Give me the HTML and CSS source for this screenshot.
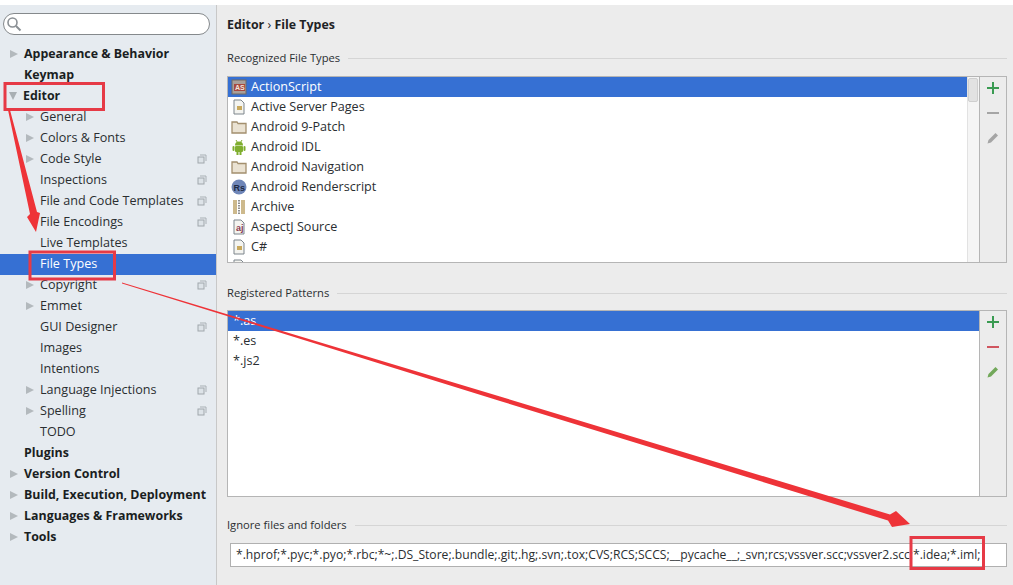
FILE: index.html
```html
<!DOCTYPE html>
<html lang="en">
<head>
<meta charset="utf-8">
<title>Settings - File Types</title>
<link rel="stylesheet" href="styles.css">
</head>
<body>
<div class="app">
  <aside class="sidebar">
    <div class="search">
      <svg class="search-icon" width="16" height="16" viewBox="0 0 16 16"><circle cx="6.5" cy="6.5" r="4.5" fill="none" stroke="#8a8f94" stroke-width="1.6"/><path d="M10 10l4.5 4.5" stroke="#8a8f94" stroke-width="2" fill="none"/></svg>
    </div>
    <ul class="tree">
      <li class="row bold"><i class="arrow"></i>Appearance &amp; Behavior</li>
      <li class="row bold"><i class="arrow none"></i>Keymap</li>
      <li class="row bold"><i class="arrow down"></i>Editor</li>
      <li class="row sub"><i class="arrow"></i>General</li>
      <li class="row sub"><i class="arrow"></i>Colors &amp; Fonts</li>
      <li class="row sub"><i class="arrow"></i>Code Style<svg class="copy" viewBox="0 0 10 10"><use href="#copy"/></svg></li>
      <li class="row sub"><i class="arrow none"></i>Inspections<svg class="copy" viewBox="0 0 10 10"><use href="#copy"/></svg></li>
      <li class="row sub"><i class="arrow none"></i>File and Code Templates<svg class="copy" viewBox="0 0 10 10"><use href="#copy"/></svg></li>
      <li class="row sub"><i class="arrow none"></i>File Encodings<svg class="copy" viewBox="0 0 10 10"><use href="#copy"/></svg></li>
      <li class="row sub"><i class="arrow none"></i>Live Templates</li>
      <li class="row sub selected"><i class="arrow none"></i>File Types</li>
      <li class="row sub"><i class="arrow"></i>Copyright<svg class="copy" viewBox="0 0 10 10"><use href="#copy"/></svg></li>
      <li class="row sub"><i class="arrow"></i>Emmet</li>
      <li class="row sub"><i class="arrow none"></i>GUI Designer<svg class="copy" viewBox="0 0 10 10"><use href="#copy"/></svg></li>
      <li class="row sub"><i class="arrow none"></i>Images</li>
      <li class="row sub"><i class="arrow none"></i>Intentions</li>
      <li class="row sub"><i class="arrow"></i>Language Injections<svg class="copy" viewBox="0 0 10 10"><use href="#copy"/></svg></li>
      <li class="row sub"><i class="arrow"></i>Spelling<svg class="copy" viewBox="0 0 10 10"><use href="#copy"/></svg></li>
      <li class="row sub"><i class="arrow none"></i>TODO</li>
      <li class="row bold"><i class="arrow none"></i>Plugins</li>
      <li class="row bold"><i class="arrow"></i>Version Control</li>
      <li class="row bold"><i class="arrow"></i>Build, Execution, Deployment</li>
      <li class="row bold"><i class="arrow"></i>Languages &amp; Frameworks</li>
      <li class="row bold"><i class="arrow"></i>Tools</li>
    </ul>
  </aside>
  <main class="content">
    <h1 class="crumb">Editor <span class="sep">›</span> File Types</h1>
    <div class="legend legend-first"><span>Recognized File Types</span></div>
    <div class="panel panel-types">
      <ul class="list">
        <li class="item selected">
          <svg class="ico" viewBox="0 0 16 16"><rect x="1" y="1" width="14" height="14" fill="#a99f9a" stroke="#6f6864"/><rect x="3" y="5" width="11" height="7" fill="#a8483f"/><text x="4" y="11.2" class="ico-text">AS</text></svg>ActionScript</li>
        <li class="item"><svg class="ico" viewBox="0 0 16 16"><use href="#file"/><rect x="6" y="7" width="5" height="4" fill="#c9a95c"/></svg>Active Server Pages</li>
        <li class="item"><svg class="ico" viewBox="0 0 16 16"><use href="#folder"/></svg>Android 9-Patch</li>
        <li class="item"><svg class="ico" viewBox="0 0 16 16"><g fill="#7fae2e"><path d="M4 6.5a4 4 0 0 1 8 0z"/><rect x="4" y="7" width="8" height="6" rx="1"/><rect x="1.5" y="7" width="2" height="5" rx="1"/><rect x="12.5" y="7" width="2" height="5" rx="1"/><rect x="5.5" y="13" width="2" height="3"/><rect x="8.5" y="13" width="2" height="3"/></g><path d="M5 1l1.5 2.5M11 1L9.500 3.500" stroke="#7fae2e"/></svg>Android IDL</li>
        <li class="item"><svg class="ico" viewBox="0 0 16 16"><use href="#folder"/></svg>Android Navigation</li>
        <li class="item"><svg class="ico" viewBox="0 0 16 16"><circle cx="8" cy="8" r="7.500" fill="#6f86b8"/><text x="2.500" y="11.500" class="ico-text dark">Rs</text></svg>Android Renderscript</li>
        <li class="item"><svg class="ico" viewBox="0 0 16 16"><rect x="2" y="1" width="4" height="14" fill="#cdb98c"/><rect x="10" y="1" width="4" height="14" fill="#cdb98c"/><path d="M7.500 1v14M8.500 1v14" stroke="#8f8f8f" stroke-dasharray="1.500 1"/></svg>Archive</li>
        <li class="item"><svg class="ico" viewBox="0 0 16 16"><use href="#file"/><text x="5" y="12" class="ico-text dark-red">aj</text></svg>AspectJ Source</li>
        <li class="item"><svg class="ico" viewBox="0 0 16 16"><use href="#file"/><rect x="6" y="7" width="5" height="4" fill="#c9a95c"/></svg>C#</li>
        <li class="item"><svg class="ico" viewBox="0 0 16 16"><use href="#file"/></svg></li>
      </ul>
      <div class="scrollbar"><div class="thumb"></div></div>
      <div class="tools">
        <svg class="tool" viewBox="0 0 14 14"><path d="M7 1v12M1 7h12" stroke="#3a9b52" stroke-width="2"/></svg>
        <svg class="tool" viewBox="0 0 14 14"><path d="M1 7h12" stroke="#a5a5a5" stroke-width="2"/></svg>
        <svg class="tool" viewBox="0 0 14 14"><path d="M1.500 12.500l1-3.500 7-7 2.500 2.500-7 7z" fill="#a5a5a5"/></svg>
      </div>
    </div>
    <div class="legend"><span>Registered Patterns</span></div>
    <div class="panel panel-patterns">
      <ul class="list">
        <li class="item selected plain">*.as</li>
        <li class="item plain">*.es</li>
        <li class="item plain">*.js2</li>
      </ul>
      <div class="tools">
        <svg class="tool" viewBox="0 0 14 14"><path d="M7 1v12M1 7h12" stroke="#3a9b52" stroke-width="2"/></svg>
        <svg class="tool" viewBox="0 0 14 14"><path d="M1 7h12" stroke="#d0555f" stroke-width="2"/></svg>
        <svg class="tool" viewBox="0 0 14 14"><path d="M1.500 12.500l1-3.500 7-7 2.500 2.500-7 7z" fill="#72a85a"/></svg>
      </div>
    </div>
    <div class="legend legend-ignore"><span>Ignore files and folders</span></div>
    <div class="ignore">*.hprof;*.pyc;*.pyo;*.rbc;*~;.DS_Store;.bundle;.git;.hg;.svn;.tox;CVS;RCS;SCCS;__pycache__;_svn;rcs;vssver.scc;vssver2.scc;*.idea;*.iml;</div>
  </main>
</div>

<svg class="defs" width="0" height="0">
  <defs>
    <g id="copy"><path d="M3 1h6v6" fill="none" stroke="#a9b0b5"/><rect x="1" y="3" width="6" height="6" fill="#dde3e8" stroke="#a0a7ac"/></g>
    <g id="file"><path d="M3 1h7l3 3v11H3z" fill="#f4f4f0" stroke="#7d858c"/></g>
    <g id="folder"><path d="M1 3h5l1 1.500h8V14H1z" fill="#eae2d2" stroke="#a38f6e" stroke-width="1.300"/></g>
  </defs>
</svg>

<svg class="annotations" width="1013" height="585" viewBox="0 0 1013 585">
  <g fill="none" stroke="#e63a46" stroke-width="3">
    <rect x="5" y="83.500" width="98.500" height="26"/>
    <rect x="30" y="252" width="84.500" height="27"/>
    <rect x="911" y="537.500" width="72.500" height="31"/>
  </g>
  <path d="M8 110L10 110 37 212 40 213 36 232 27 217 30 214z" fill="#ee3338"/>
  <path d="M122 282.600L500 396.600 890 514.500 896 511 910 524 892 527 888 520.500 500 401 122 283.400z" fill="#ee3338"/>
</svg>
</body>
</html>
```
FILE: styles.css
```css
* { box-sizing: border-box; }
html, body { margin: 0; padding: 0; }
body {
  width: 1013px;
  height: 585px;
  overflow: hidden;
  background: #fff;
  font-family: "Open Sans", "Noto Sans", sans-serif;
  font-size: 12.600px;
  color: #1f2326;
  position: relative;
}
.app { display: flex; height: 585px; padding-top: 5px; }
.sidebar {
  width: 217px;
  flex: none;
  background: #e6ebf0;
  border-right: 1px solid #c8c8c8;
  padding: 8px 0 0 0;
}
.search {
  width: 207px;
  height: 22px;
  margin-left: 3px;
  background: #fff;
  border: 1px solid #85898c;
  border-radius: 11px;
  padding: 2px 0 0 2px;
}
.search-icon { display: block; }
.tree { list-style: none; margin: 9px 0 0; padding: 0; }
.row {
  height: 21px;
  display: flex;
  align-items: center;
  white-space: nowrap;
  padding: 0 9px 2px 9px;
}
.row.bold { font-weight: 700; font-size: 12.400px; color: #1a1e22; }
.row.sub { padding-left: 25px; color: #2a2e31; }
.row.selected { background: #3670d3; color: #fff; }
.arrow {
  width: 0;
  height: 0;
  flex: none;
  margin-right: 6px;
  margin-left: 1px;
  border-left: 8px solid #b3b9bd;
  border-top: 4.5px solid transparent;
  border-bottom: 4.5px solid transparent;
}
.arrow.down {
  border-top: 8px solid #a9afb3;
  border-left: 4.500px solid transparent;
  border-right: 4.500px solid transparent;
  border-bottom: 0;
  margin-left: 0;
  margin-right: 6px;
}
.arrow.none { visibility: hidden; }
.copy { width: 10px; height: 10px; margin-left: auto; }
.content {
  flex: 1;
  min-width: 0;
  background: #ececec;
  padding: 10px 6px 0 10px;
}
.crumb {
  margin: 0;
  font-size: 12.400px;
  font-weight: 700;
  line-height: 19px;
  color: #1f2326;
}
.sep { font-weight: 400; }
.legend {
  display: flex;
  align-items: center;
  gap: 8px;
  height: 18px;
  line-height: 18px;
  font-size: 11.200px;
  color: #2a2e31;
  margin-top: 21px;
}
.legend::after {
  content: "";
  flex: 1;
  border-top: 1px solid #d5d5d5;
}
.legend-first { margin-top: 15px; }
.panel { display: flex; border: 1px solid #b5b5b5; background: #fff; }
.panel-types { height: 187px; margin-top: 9px; }
.panel-patterns { height: 187px; margin-top: 8px; }
.list { list-style: none; margin: 0; padding: 0; flex: 1; min-width: 0; overflow: hidden; }
.item {
  height: 20px;
  line-height: 20px;
  display: flex;
  align-items: center;
  padding-left: 3px;
  color: #2a2e31;
  white-space: nowrap;
}
.item.plain { padding-left: 5px; }
.item.selected { background: #3670d3; color: #fff; }
.ico { width: 16px; height: 16px; margin-right: 4px; flex: none; }
.ico-text { font-size: 7px; font-weight: 700; fill: #f3e6dd; font-family: "Liberation Sans", sans-serif; }
.ico-text.dark { fill: #1d2a44; font-size: 9px; }
.ico-text.dark-red { fill: #8a3a50; font-size: 9px; }
.scrollbar { width: 12px; flex: none; background: #f5f5f5; border-left: 1px solid #e2e2e2; padding: 1px 1px 0 0; }
.thumb { height: 24px; background: #e2e2e2; border: 1px solid #cfcfcf; border-radius: 2px; }
.tools {
  width: 27px;
  flex: none;
  background: #ececec;
  border-left: 1px solid #b5b5b5;
  display: flex;
  flex-direction: column;
  align-items: center;
  gap: 11px;
  padding-top: 4px;
}
.tool { width: 14px; height: 14px; }
.legend-ignore { margin-top: 19px; }
.ignore {
  margin: 9px 0 0 3px;
  width: 777px;
  height: 24px;
  line-height: 22px;
  border: 1px solid #b0b0b0;
  background: #fff;
  padding-left: 5px;
  color: #2a2e31;
  font-size: 12.130px;
  white-space: nowrap;
  overflow: hidden;
}
.defs { position: absolute; }
.annotations { position: absolute; left: 0; top: 0; pointer-events: none; }
```
